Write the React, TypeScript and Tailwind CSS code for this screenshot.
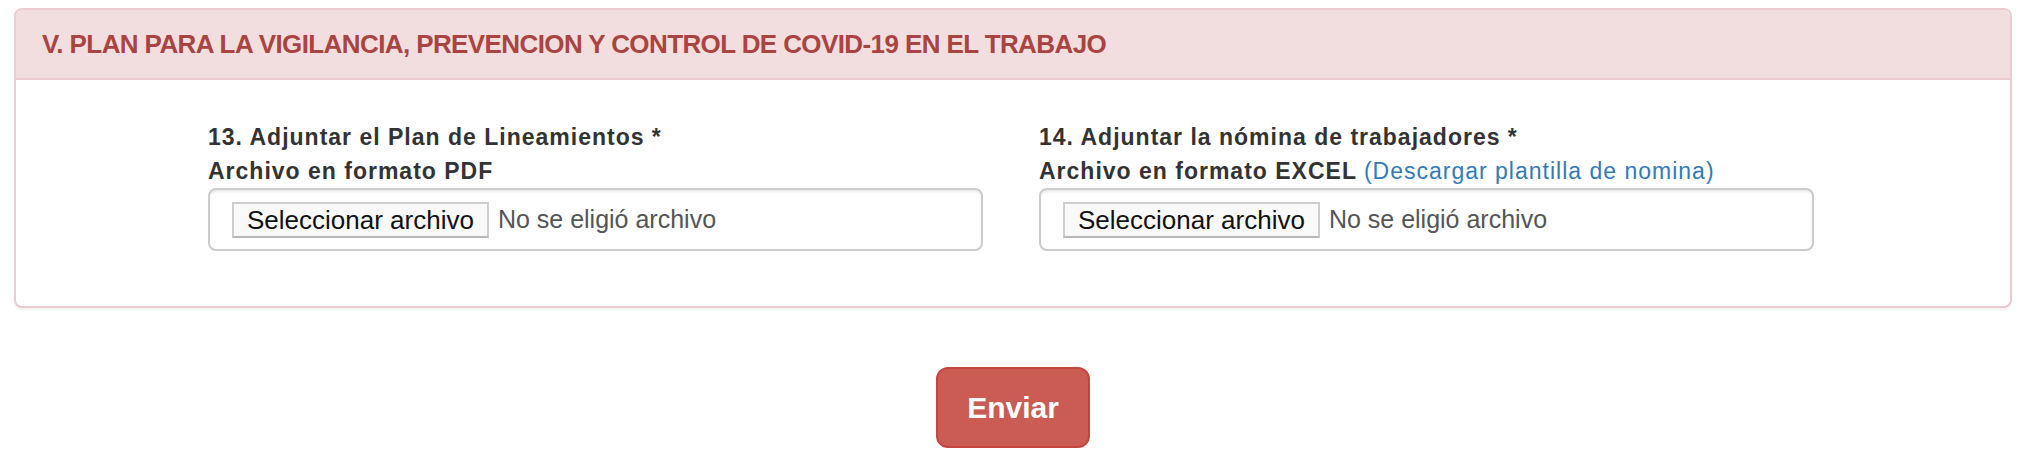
const campos = [
  {
    id: 'plan',
    titulo: '13. Adjuntar el Plan de Lineamientos *',
    formato: 'PDF',
    enlace: null as string | null,
  },
  {
    id: 'nomina',
    titulo: '14. Adjuntar la nómina de trabajadores *',
    formato: 'EXCEL',
    enlace: '(Descargar plantilla de nomina)',
  },
]

function CampoArchivo({
  titulo,
  formato,
  enlace,
}: {
  titulo: string
  formato: string
  enlace: string | null
}) {
  return (
    <div>
      <p className="text-[23px] leading-[34px] font-bold text-[#333] tracking-[1px]">{titulo}</p>
      <p className="text-[23px] leading-[34px] font-bold text-[#333] tracking-[1px]">
        Archivo en formato {formato}
        {enlace && (
          <>
            {' '}
            <a href="#" className="font-normal text-[#337ab7]">
              {enlace}
            </a>
          </>
        )}
      </p>
      <div className="h-[63px] border-2 border-[#ccc] rounded-[8px] flex items-center pl-[22px] shadow-[inset_0_2px_2px_rgba(0,0,0,0.075)]">
        <button
          type="button"
          className="h-[36px] px-[13px] border-2 border-[#cdcdcd] border-b-[#b8b8b8] bg-[#f9f9f9] text-[26px] leading-none text-[#111]"
        >
          Seleccionar archivo
        </button>
        <span className="ml-[9px] text-[25px] text-[#555]">No se eligió archivo</span>
      </div>
    </div>
  )
}

export default function App() {
  return (
    <div className="min-h-[472px] bg-white pt-[8px] font-['Liberation_Sans',Arial,sans-serif]">
      <div className="ml-[14px] w-[1998px]">
        <div className="bg-white border-2 border-[#ebccd1] rounded-[8px] shadow-[0_2px_2px_rgba(0,0,0,0.05)]">
          <div className="h-[70px] flex items-center pl-[26px] bg-[#f2dede] border-b-2 border-[#ebccd1] rounded-t-[6px]">
            <h3 className="text-[26px] font-bold text-[#a94442] uppercase tracking-[-0.6px]">
              V. Plan para la vigilancia, prevencion y control de COVID-19 en el trabajo
            </h3>
          </div>
          <div className="grid grid-cols-2 gap-x-[56px] pt-[40px] pb-[55px] pl-[192px] pr-[196px]">
            {campos.map((c) => (
              <CampoArchivo key={c.id} titulo={c.titulo} formato={c.formato} enlace={c.enlace} />
            ))}
          </div>
        </div>

        <div className="mt-[59px] flex justify-center">
          <button
            type="submit"
            className="h-[81px] px-[29px] rounded-[12px] border-2 border-[#c4463f] bg-[#ca5c54] text-white font-bold text-[30px]"
          >
            Enviar
          </button>
        </div>
      </div>
    </div>
  )
}
